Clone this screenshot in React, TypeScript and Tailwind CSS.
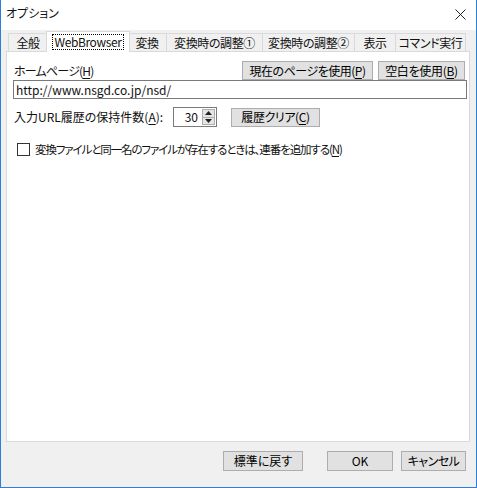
import React from 'react';

const font = { fontFamily: '"Noto Sans CJK JP", "Noto Sans", sans-serif' };

function U({ c }: { c: string }) {
  return <span className="underline underline-offset-[2px]">{c}</span>;
}

function Btn({ w, children, className = '' }: { w: string; children: React.ReactNode; className?: string }) {
  return (
    <div
      className={`flex h-[19px] items-center justify-center border border-[#adadad] bg-[#e1e1e1] text-[12px] leading-none text-black ${w} ${className}`}
    >
      {children}
    </div>
  );
}

const tabs = [
  { label: '全般', w: 'w-[40px]' },
  { label: 'WebBrowser', w: 'w-[84px]', active: true },
  { label: '変換', w: 'w-[40px]' },
  { label: '変換時の調整①', w: 'w-[97px]' },
  { label: '変換時の調整②', w: 'w-[93px]' },
  { label: '表示', w: 'w-[42px]' },
  { label: 'コマンド実行', w: 'w-[71px]' },
];

export default function App() {
  return (
    <div
      style={font}
      className="flex h-[488px] w-[477px] flex-col border border-t-0 border-[#2b7fd6] text-[12px] text-[#111] [font-feature-settings:'palt']"
    >
      {/* Title bar */}
      <div className="flex h-[30px] items-center justify-between bg-white pb-[4px] pl-[5px] pr-[10px]">
        <span>オプション</span>
        <svg width="11" height="11" viewBox="0 0 11 11" className="mt-[2px]">
          <path d="M0.5 0.5 L10.5 10.5 M10.5 0.5 L0.5 10.5" stroke="#222" strokeWidth="1" />
        </svg>
      </div>

      {/* Body */}
      <div className="flex flex-1 flex-col bg-[#f0f0f0] pl-[5px] pr-[6px] pt-[1px]">
        {/* Tabs */}
        <div className="flex h-[20px] items-end pl-[2px] tracking-[-0.4px]">
          {tabs.map((t, i) =>
            t.active ? (
              <div
                key={t.label}
                className={`relative z-10 -mx-[2px] -mb-px flex h-[21px] items-center justify-center border border-b-0 border-[#d9d9d9] bg-white ${t.w}`}
              >
                <span className="border border-dotted border-black px-[2px] leading-[14px]">{t.label}</span>
              </div>
            ) : (
              <div
                key={t.label}
                className={`flex h-[18px] items-center justify-center border border-b-0 border-[#d9d9d9] bg-[#f0f0f0] ${i > 0 ? '-ml-px' : ''} ${t.w}`}
              >
                {t.label}
              </div>
            )
          )}
        </div>

        {/* Panel */}
        <div className="flex flex-1 flex-col border border-[#d9d9d9] bg-white pl-[6px] pr-[2px] pt-[9px]">
          <div className="flex h-[19px] items-center">
            <span className="ml-[1px] flex-1 tracking-[-0.8px]">
              ホームページ(<U c="H" />)
            </span>
            <Btn w="w-[131px]" className="tracking-[-0.5px]">
              現在のページを使用(<U c="P" />)
            </Btn>
            <Btn w="w-[87px]" className="ml-[5px] mr-[2px] tracking-[-0.3px]">
              空白を使用(<U c="B" />)
            </Btn>
          </div>
          <div className="flex h-[19px] items-center border border-[#7a7a7a] px-[2px]">
            http://www.nsgd.co.jp/nsd/
          </div>

          <div className="mt-[8px] flex h-[20px] items-center">
            <span className="ml-[1px] w-[159px]">
              入力URL履歴の保持件数(<U c="A" />):
            </span>
            <div className="flex h-[20px] w-[44px] items-center border border-[#7a7a7a]">
              <span className="flex-1 pr-[4px] text-right">30</span>
              <div className="mr-px flex h-[16px] w-[13px] flex-col border border-[#adadad] bg-[#e5e5e5]">
                <div className="flex flex-1 items-center justify-center border-b border-[#adadad]">
                  <svg width="7" height="4" viewBox="0 0 7 4">
                    <path d="M0 4 L3.5 0 L7 4 Z" fill="#222" />
                  </svg>
                </div>
                <div className="flex flex-1 items-center justify-center">
                  <svg width="7" height="4" viewBox="0 0 7 4">
                    <path d="M0 0 L3.5 4 L7 0 Z" fill="#222" />
                  </svg>
                </div>
              </div>
            </div>
            <Btn w="w-[89px]" className="ml-[14px] tracking-[-0.4px]">
              履歴クリア(<U c="C" />)
            </Btn>
          </div>

          <div className="mt-[14px] flex items-center">
            <div className="ml-[4px] h-[13px] w-[13px] border border-[#333333] bg-white" />
            <span className="ml-[5px] text-[11.5px] tracking-[-1.1px]">
              変換ファイルと同一名のファイルが存在するときは、連番を追加する(<U c="N" />)
            </span>
          </div>
        </div>

        {/* Footer */}
        <div className="flex h-[45px] items-start justify-end pr-[4px] pt-[9px]">
          <Btn w="w-[80px]" className="h-[20px]">
            標準に戻す
          </Btn>
          <Btn w="w-[66px]" className="ml-[24px] h-[20px]">
            OK
          </Btn>
          <Btn w="w-[65px]" className="ml-[8px] h-[20px] tracking-[-0.5px]">
            キャンセル
          </Btn>
        </div>
      </div>
    </div>
  );
}
